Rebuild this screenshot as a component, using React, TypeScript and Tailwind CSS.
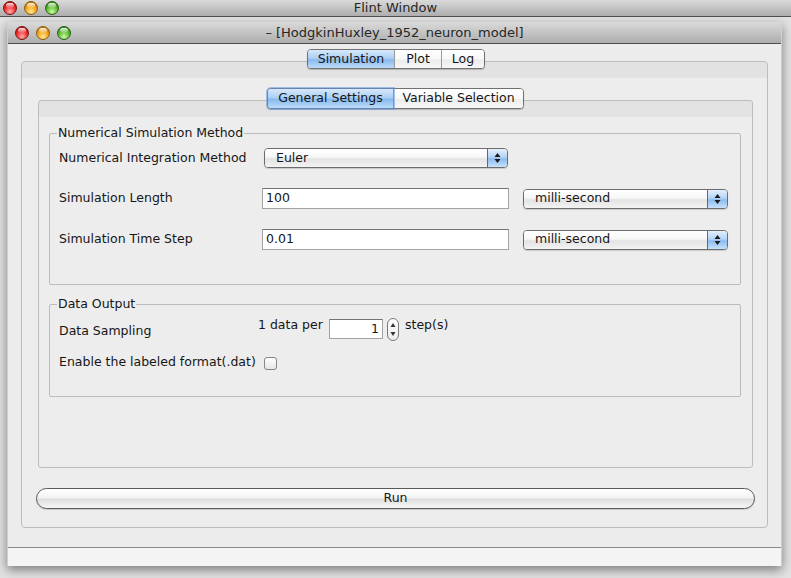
type LightColor = 'red' | 'yellow' | 'green';

const lightClass: Record<LightColor, string> = {
  red: 'bg-[radial-gradient(circle_at_50%_80%,#ffb0b0_0%,#ee2a2a_50%,#9c0000_100%)] border-[#7a1010]',
  yellow: 'bg-[radial-gradient(circle_at_50%_80%,#ffe9a0_0%,#f4a210_50%,#a35600_100%)] border-[#8c5a10]',
  green: 'bg-[radial-gradient(circle_at_50%_80%,#d0f7a8_0%,#58bb2c_50%,#1f6810_100%)] border-[#2a5e1c]',
};

function Light({ c }: { c: LightColor }) {
  return (
    <div className={`w-[14px] h-[14px] rounded-full border flex justify-center items-start pt-[1px] ${lightClass[c]}`}>
      <div className="w-[8px] h-[5px] rounded-full bg-[linear-gradient(rgba(255,255,255,0.9),rgba(255,255,255,0.1))]" />
    </div>
  );
}

function TitleBar({ title, h, pl }: { title: string; h: string; pl: string }) {
  return (
    <div className={`relative ${h} ${pl} flex items-center gap-[7px] bg-[linear-gradient(#dadada,#adadad)] border-b border-[#4e4e4e]`}>
      <Light c="red" />
      <Light c="yellow" />
      <Light c="green" />
      <div className="absolute inset-0 flex items-center justify-center text-[13px] text-[#262626]">{title}</div>
    </div>
  );
}

function Arrows() {
  return (
    <svg width="7" height="12" viewBox="0 0 7 12">
      <path d="M3.5 1 L6.5 5 L0.5 5 Z" fill="#1a1a1a" />
      <path d="M3.5 11 L6.5 7 L0.5 7 Z" fill="#1a1a1a" />
    </svg>
  );
}

function Combo({ text, w }: { text: string; w: string }) {
  return (
    <div className={`${w} h-[20px] flex rounded-[4px] border border-[#6c6c6c] overflow-hidden shadow-[0_1px_1px_rgba(0,0,0,0.15)]`}>
      <div className="flex-1 flex items-center pl-[11px] bg-[linear-gradient(#ffffff,#f7f7f7_45%,#e3e3e3_55%,#f3f3f3)]">{text}</div>
      <div className="w-[20px] flex items-center justify-center border-l border-[#4b6a9e] bg-[linear-gradient(#e3effc,#b5d4f6_45%,#8cbcf0_55%,#c7e2fb)]">
        <Arrows />
      </div>
    </div>
  );
}

function Field({ value, w }: { value: string; w: string }) {
  return (
    <div className={`${w} h-[21px] flex items-center pl-[3px] bg-white border border-[#a3a3a3] border-t-[#747474]`}>{value}</div>
  );
}

function Segments({ items, widths, h, ring }: { items: string[]; widths: string[]; h: string; ring?: boolean }) {
  return (
    <div className={`flex ${h} rounded-[4px] border border-[#707070] bg-white shadow-[0_1px_1px_rgba(0,0,0,0.2)]`}>
      {items.map((it, i) => (
        <div
          key={it}
          className={`${widths[i]} flex items-center justify-center ${
            i === 0
              ? `rounded-l-[3px] bg-[linear-gradient(#d6e8fb,#acd0f5_45%,#88baef_55%,#bcdcf8)] ${ring ? 'shadow-[0_0_0_2px_rgba(95,150,225,0.55)] relative' : ''}`
              : 'border-l border-[#9a9a9a] bg-[linear-gradient(#ffffff,#f8f8f8_50%,#ececec_55%,#f8f8f8)]'
          } ${i === items.length - 1 ? 'rounded-r-[3px]' : ''}`}
        >
          {it}
        </div>
      ))}
    </div>
  );
}

function Spinner() {
  return (
    <div className="w-[12px] h-[23px] rounded-[6px] border border-[#7a7a7a] bg-[linear-gradient(#ffffff,#ececec)] flex items-center justify-center">
      <svg width="6" height="17" viewBox="0 0 6 17">
        <path d="M3 2 L5.5 6 L0.5 6 Z" fill="#333" />
        <path d="M3 15 L5.5 11 L0.5 11 Z" fill="#333" />
      </svg>
    </div>
  );
}

export default function App() {
  return (
    <div className="w-[791px] h-[578px] overflow-hidden bg-[#e2e2e2] font-['DejaVu_Sans',sans-serif] text-[12.5px] text-[#161616]">
      <TitleBar title="Flint Window" h="h-[17px]" pl="pl-[3px]" />

      <div className="mt-[5px] ml-[7px] w-[775px] h-[544px] flex flex-col bg-[#ececec] border-x border-[#cfcfcf] shadow-[0_4px_10px_rgba(0,0,0,0.45)]">
        <TitleBar title="– [HodgkinHuxley_1952_neuron_model]" h="h-[22px]" pl="pl-[7px]" />

        <div className="flex-1 pl-[13px] pr-[13px] pt-[5px]">
          <div className="relative z-10 flex justify-center pl-[3px]">
            <Segments items={['Simulation', 'Plot', 'Log']} widths={['w-[86px]', 'w-[47px]', 'w-[43px]']} h="h-[20px]" />
          </div>

          <div className="-mt-[8px] h-[467px] rounded-[4px] border border-[#bdbdbd] bg-[linear-gradient(#e2e2e2_0,#e2e2e2_16px,#ededed_16px)] pl-[14px] pr-[12px] pt-[26px]">
            <div className="relative z-10 flex justify-center">
              <Segments
                items={['General Settings', 'Variable Selection']}
                widths={['w-[125px]', 'w-[130px]']}
                h="h-[21px]"
                ring
              />
            </div>

            <div className="-mt-[9px] mx-[2px] h-[368px] rounded-[3px] border border-[#bdbdbd] bg-[linear-gradient(#e3e3e3_0,#e3e3e3_16px,#ededed_16px)] pl-[10px] pr-[11px] pt-[24px]">
              <fieldset className="border border-[#bcbcbc] rounded-[2px] px-[9px] pt-[7px] pb-[34px]">
                <legend className="-ml-[2px] px-[1px] leading-[16px]">Numerical Simulation Method</legend>
                <div className="flex items-center h-[20px]">
                  <div className="w-[205px]">Numerical Integration Method</div>
                  <Combo text="Euler" w="w-[244px]" />
                </div>
                <div className="flex items-center h-[21px] mt-[20px]">
                  <div className="w-[203px]">Simulation Length</div>
                  <Field value="100" w="w-[247px]" />
                  <div className="ml-[14px]">
                    <Combo text="milli-second" w="w-[205px]" />
                  </div>
                </div>
                <div className="flex items-center h-[21px] mt-[20px]">
                  <div className="w-[203px]">Simulation Time Step</div>
                  <Field value="0.01" w="w-[247px]" />
                  <div className="ml-[14px]">
                    <Combo text="milli-second" w="w-[205px]" />
                  </div>
                </div>
              </fieldset>

              <fieldset className="mt-[11px] border border-[#bcbcbc] rounded-[2px] px-[9px] pt-[5px] pb-[26px]">
                <legend className="-ml-[2px] px-[1px] leading-[16px]">Data Output</legend>
                <div className="flex items-start">
                  <div className="w-[199px] mt-[6px] leading-[16px]">Data Sampling</div>
                  <div className="w-[71px] leading-[16px]">1 data per</div>
                  <div className="mt-[2px] w-[54px] h-[20px] flex items-center justify-end pr-[3px] bg-white border border-[#a3a3a3] border-t-[#747474]">1</div>
                  <div className="ml-[4px] mt-[1px]">
                    <Spinner />
                  </div>
                  <div className="ml-[6px] leading-[16px]">step(s)</div>
                </div>
                <div className="flex items-start mt-[13px]">
                  <div className="w-[205px] leading-[16px]">Enable the labeled format(.dat)</div>
                  <div className="mt-[3px] w-[13px] h-[13px] rounded-[3px] border border-[#858585] bg-[linear-gradient(#ffffff,#e6e6e6)]" />
                </div>
              </fieldset>
            </div>

            <button className="mt-[20px] w-full h-[21px] rounded-full border border-[#585858] bg-[linear-gradient(#ffffff,#f3f3f3_45%,#dfdfdf_55%,#f7f7f7)] shadow-[0_1px_1px_rgba(0,0,0,0.15)] text-[12.5px] text-[#161616] font-['DejaVu_Sans',sans-serif]">
              Run
            </button>
          </div>
        </div>

        <div className="h-[19px] border-t border-[#8a8a8a] bg-[#f4f4f4]" />
      </div>
    </div>
  );
}
